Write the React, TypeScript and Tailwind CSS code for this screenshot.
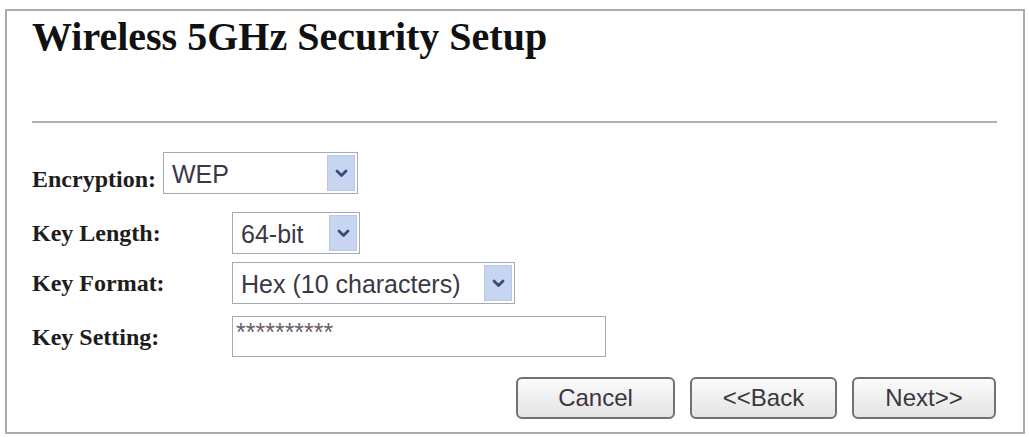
import React from "react";

const serif = { fontFamily: '"Liberation Serif", "Times New Roman", serif' };
const sans = { fontFamily: '"Liberation Sans", Arial, sans-serif' };

function Chevron() {
  return (
    <svg width="13" height="9" viewBox="0 0 13 9" fill="none" stroke="#3a4c76" strokeWidth="2.8" strokeLinecap="round" strokeLinejoin="round">
      <polyline points="2,2 6.5,6.5 11,2" />
    </svg>
  );
}

function Select({ value, width }: { value: string; width: string }) {
  return (
    <div className={`flex h-[42px] items-center justify-between border border-[#a3aab4] bg-white ${width}`}>
      <span className="pl-[8px] pt-[2px] text-[25px] leading-[25px] text-[#3a3846]" style={sans}>{value}</span>
      <span className="m-[2px] flex h-[36px] w-[28px] items-center justify-center border border-[#b9c8e6] bg-[#c7d5f0]">
        <Chevron />
      </span>
    </div>
  );
}

function Label({ children }: { children: React.ReactNode }) {
  return (
    <span className="w-[200px] shrink-0 text-[24px] font-bold leading-[24px] text-[#1e1c1c]" style={serif}>{children}</span>
  );
}

function Button({ label, width }: { label: string; width: string }) {
  return (
    <button className={`h-[42px] rounded-[6px] border-2 border-[#6f7173] bg-gradient-to-b from-[#fbfbfb] to-[#e4e4e4] text-[24px] leading-[24px] text-[#3b3540] ${width}`} style={sans}>
      {label}
    </button>
  );
}

export default function App() {
  return (
    <div className="min-h-[437px] bg-white pt-[9px] pl-[5px]">
      <div className="flex h-[425px] w-[1020px] flex-col border-2 border-[#ababab] pl-[25px] pt-[6px]">
        {/* Title */}
        <h1 className="text-[40px] font-bold leading-[40px] text-[#111111]" style={serif}>Wireless 5GHz Security Setup</h1>
        <div className="mt-[64px] h-[2px] w-[965px] bg-[#b2b2b2]" />

        {/* Encryption */}
        <div className="mt-[29px] flex items-end">
          <span className="mb-[3px] w-[131px] text-[24px] font-bold leading-[24px] text-[#1e1c1c]" style={serif}>Encryption:</span>
          <Select value="WEP" width="w-[195px]" />
        </div>

        <div className="mt-[18px] flex items-center">
          <Label>Key Length:</Label>
          <Select value="64-bit" width="w-[128px]" />
        </div>

        <div className="mt-[8px] flex items-center">
          <Label>Key Format:</Label>
          <Select value="Hex (10 characters)" width="w-[283px]" />
        </div>

        <div className="mt-[12px] flex items-center">
          <Label>Key Setting:</Label>
          <div className="flex h-[41px] w-[374px] items-start border border-[#a3aab4] bg-white pl-[3px] pt-[3px]">
            <span className="text-[25px] leading-[25px] text-[#6a6068]" style={sans}>**********</span>
          </div>
        </div>

        {/* Buttons */}
        <div className="mt-[20px] flex gap-[15px] pl-[484px]">
          <Button label="Cancel" width="w-[159px]" />
          <Button label="<<Back" width="w-[147px]" />
          <Button label="Next>>" width="w-[144px]" />
        </div>
      </div>
    </div>
  );
}
